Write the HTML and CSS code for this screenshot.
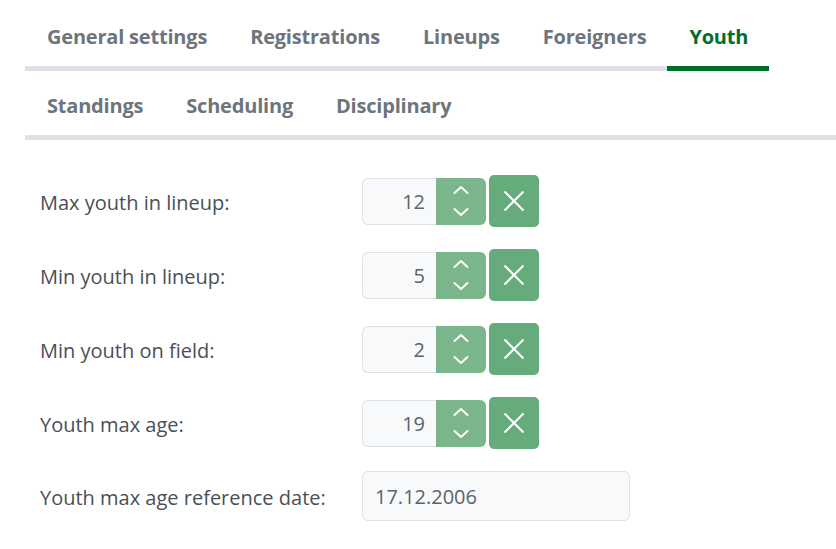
FILE: index.html
```html
<!DOCTYPE html>
<html>
<head>
    <title>Youth settings</title>
    <link rel="stylesheet" href="styles.css">
</head>
<body>
    <ul class="tabs">
        <li><a href="#">General settings</a></li>
        <li><a href="#">Registrations</a></li>
        <li><a href="#">Lineups</a></li>
        <li><a href="#">Foreigners</a></li>
        <li class="active"><a href="#">Youth</a></li>
        <li class="break"></li>
        <li class="last"><a href="#">Standings</a></li>
        <li class="last"><a href="#">Scheduling</a></li>
        <li class="last"><a href="#">Disciplinary</a></li>
    </ul>

    <form class="settings">
        <label>Max youth in lineup:</label>
        <div class="number-group">
            <input type="text" value="12">
            <span class="spin">
                <svg width="16" height="32" viewBox="0 0 16 32"><path d="M1.5 8l6.5-6 6.5 6M1.5 24l6.5 6 6.5-6" fill="none" stroke="#fff" stroke-width="2" stroke-linecap="round" stroke-linejoin="round"/></svg>
            </span>
            <button type="button" class="clear">
                <svg width="22" height="22" viewBox="0 0 22 22"><path d="M1.5 1.5l19 19M20.5 1.5l-19 19" stroke="#fff" stroke-width="2"/></svg>
            </button>
        </div>

        <label>Min youth in lineup:</label>
        <div class="number-group">
            <input type="text" value="5">
            <span class="spin">
                <svg width="16" height="32" viewBox="0 0 16 32"><path d="M1.5 8l6.5-6 6.5 6M1.5 24l6.5 6 6.5-6" fill="none" stroke="#fff" stroke-width="2" stroke-linecap="round" stroke-linejoin="round"/></svg>
            </span>
            <button type="button" class="clear">
                <svg width="22" height="22" viewBox="0 0 22 22"><path d="M1.5 1.5l19 19M20.5 1.5l-19 19" stroke="#fff" stroke-width="2"/></svg>
            </button>
        </div>

        <label>Min youth on field:</label>
        <div class="number-group">
            <input type="text" value="2">
            <span class="spin">
                <svg width="16" height="32" viewBox="0 0 16 32"><path d="M1.5 8l6.5-6 6.5 6M1.5 24l6.5 6 6.5-6" fill="none" stroke="#fff" stroke-width="2" stroke-linecap="round" stroke-linejoin="round"/></svg>
            </span>
            <button type="button" class="clear">
                <svg width="22" height="22" viewBox="0 0 22 22"><path d="M1.5 1.5l19 19M20.5 1.5l-19 19" stroke="#fff" stroke-width="2"/></svg>
            </button>
        </div>

        <label>Youth max age:</label>
        <div class="number-group">
            <input type="text" value="19">
            <span class="spin">
                <svg width="16" height="32" viewBox="0 0 16 32"><path d="M1.5 8l6.5-6 6.5 6M1.5 24l6.5 6 6.5-6" fill="none" stroke="#fff" stroke-width="2" stroke-linecap="round" stroke-linejoin="round"/></svg>
            </span>
            <button type="button" class="clear">
                <svg width="22" height="22" viewBox="0 0 22 22"><path d="M1.5 1.5l19 19M20.5 1.5l-19 19" stroke="#fff" stroke-width="2"/></svg>
            </button>
        </div>

        <label>Youth max age reference date:</label>
        <div>
            <input type="text" class="date" value="17.12.2006">
        </div>
    </form>
</body>
</html>
```

FILE: styles.css
```css
body { margin: 0; padding-top: 2px; font-family: "Open Sans", "Noto Sans", Arial, sans-serif; color: #495057; background: #fff; overflow: hidden; }

.tabs { display: flex; flex-wrap: wrap; list-style: none; margin: 0 0 0 25px; padding: 0; border-bottom: 5px solid #dee2e6; }
.tabs li { border-bottom: 5px solid #dee2e6; }
.tabs li.break { flex-basis: 100%; height: 0; border: none; }
.tabs li.last { margin-bottom: -5px; }
.tabs li.active { border-bottom-color: #006e2a; }
.tabs a { display: block; height: 62px; line-height: 66px; padding: 2px 21px 0 22px; font-size: 20px; font-weight: 700; color: #6c757d; text-decoration: none; letter-spacing: -0.2px; overflow: hidden; }
.tabs li.active a { color: #006e2a; }

.settings { display: grid; grid-template-columns: 322px auto; row-gap: 22px; align-items: center; margin: 35px 0 0 40px; }
.settings label { font-size: 20px; color: #495057; padding-top: 3px; }

.number-group { display: flex; align-items: center; }
.number-group input { width: 74px; height: 47px; box-sizing: border-box; border: 1px solid #dee2e6; border-right: none; border-radius: 6px 0 0 6px; background: #f8f9fa; text-align: right; padding: 0 11px 0 0; font-family: inherit; font-size: 20px; color: #5c636a; }
.spin { display: flex; align-items: center; justify-content: center; width: 50px; height: 47px; background: #7ab58b; border-radius: 0 6px 6px 0; }
.clear { display: flex; align-items: center; justify-content: center; width: 50px; height: 52px; margin-left: 3px; padding: 0; border: none; border-radius: 5px; background: #65ab7b; cursor: pointer; }

.date { width: 268px; height: 50px; box-sizing: border-box; border: 1px solid #dee2e6; border-radius: 6px; background: #f8f9fa; padding: 0 12px; font-family: inherit; font-size: 20px; color: #5c636a; }
```
